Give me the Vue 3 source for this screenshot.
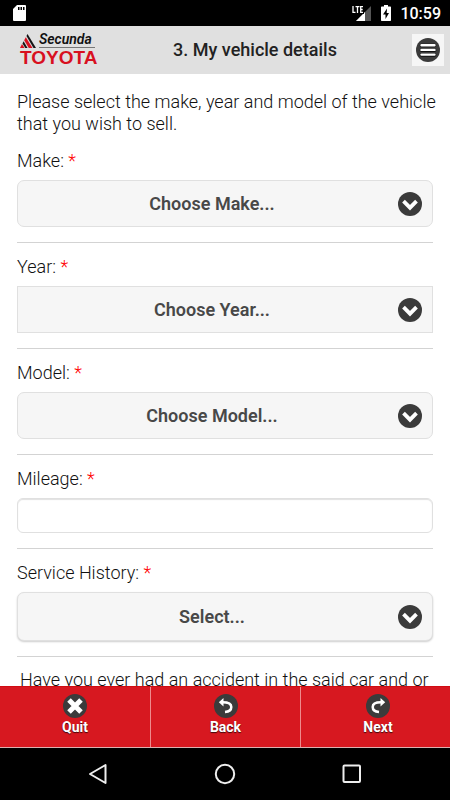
<script setup>
import { ref } from 'vue'

const fields = [
  { id: 'make', label: 'Make:', placeholder: 'Choose Make...', kind: 'select' },
  { id: 'year', label: 'Year:', placeholder: 'Choose Year...', kind: 'select', variant: 'square' },
  { id: 'model', label: 'Model:', placeholder: 'Choose Model...', kind: 'select' },
  { id: 'mileage', label: 'Mileage:', kind: 'input' },
  { id: 'service', label: 'Service History:', placeholder: 'Select...', kind: 'select', variant: 'raised' }
]
const values = ref({ make: '', year: '', model: '', mileage: '', service: '' })
</script>

<template>
  <div class="screen">
    <div class="status">
      <svg class="sd" width="13" height="16" viewBox="0 0 13 16">
        <path d="M4 0H12Q13 0 13 1V15Q13 16 12 16H1Q0 16 0 15V4Z" fill="#fff" />
        <path d="M5 2h1.500v3h-1.500zM7.500 2h1.500v3h-1.500zM10 2h1.500v3h-1.500z" fill="#000" />
      </svg>
      <div class="status-right">
        <svg width="20" height="17" viewBox="0 0 20 17">
          <path d="M19 1V16H4Z" fill="#555" />
          <path d="M13 7V16H4Z" fill="#fff" />
          <path d="M0 0H12V9H0Z" fill="#000" />
          <path d="M1 1V7.300H3.500M3.500 1.700H7.500M5.500 1.700V8M11 1.700H8.700V7.300H11M8.700 4.500H10.700" fill="none" stroke="#fff" stroke-width="1.300" />
        </svg>
        <svg width="10" height="16" viewBox="0 0 10 16">
          <path d="M3 0H7V1.500H9.300Q10 1.500 10 2.200V15.300Q10 16 9.300 16H.700Q0 16 0 15.300V2.200Q0 1.500 .700 1.500H3Z" fill="#fff" />
          <path d="M6 3.500L2 9.500H4.500V14L8 8H5.700Z" fill="#000" />
        </svg>
        <span class="clock">10:59</span>
      </div>
    </div>

    <header class="header">
      <div class="logo">
        <div class="logo-top">
          <svg width="16" height="14" viewBox="0 0 16 14">
            <path d="M7.500 0L16 14H0Z" fill="#d9d9d9" />
            <path d="M7.500 0L16 14H13.500L6.500 2Z" fill="#151515" />
            <path d="M5.800 3.200L12.500 14H8.800L4.200 6.300Z" fill="#d8101f" />
            <path d="M3.600 7.300L7.500 14H5.300L2.500 9.500Z" fill="#151515" />
            <path d="M2 10L4.500 14H0Z" fill="#d8101f" />
          </svg>
          <span class="secunda">Secunda</span>
        </div>
        <span class="toyota">TOYOTA</span>
      </div>
      <h1>3. My vehicle details</h1>
      <button class="menu" type="button" aria-label="Menu">
        <svg width="24" height="24" viewBox="0 0 24 24">
          <circle cx="12" cy="12" r="12" fill="#3b3b3b" />
          <path d="M5.500 7.500H18.500M5.500 12.200H18.500M5.500 16.900H18.500" stroke="#111" stroke-width="3.600" stroke-linecap="round" />
          <path d="M5.500 7.200H18.500M5.500 11.900H18.500M5.500 16.600H18.500" stroke="#fff" stroke-width="2.400" stroke-linecap="round" />
        </svg>
      </button>
    </header>

    <main class="main">
      <p class="intro">Please select the make, year and model of the vehicle that you wish to sell.</p>
      <div v-for="f in fields" :key="f.id" class="field">
        <label :for="f.id">{{ f.label }} <span class="req">*</span></label>
        <div v-if="f.kind === 'select'" class="select-wrap">
          <select :id="f.id" v-model="values[f.id]" :class="f.variant">
            <option value="">{{ f.placeholder }}</option>
          </select>
          <svg class="chevron" width="24" height="24" viewBox="0 0 24 24">
            <circle cx="12" cy="12" r="12" fill="#3b3b3b" />
            <path d="M5.500 9.200L12 15.700L18.500 9.200" fill="none" stroke="#fff" stroke-width="3.800" />
          </svg>
        </div>
        <input v-else :id="f.id" v-model="values[f.id]" type="text" />
      </div>
      <p class="question">Have you ever had an accident in the said car and or</p>
    </main>

    <footer class="actions">
      <button type="button">
        <svg width="24" height="24" viewBox="0 0 24 24">
          <circle cx="12" cy="12" r="12" fill="#3b3b3b" />
          <path d="M6 6L18 18M18 6L6 18" stroke="#fff" stroke-width="5" />
        </svg>
        <span>Quit</span>
      </button>
      <button type="button">
        <svg width="24" height="24" viewBox="0 0 24 24">
          <circle cx="12" cy="12" r="12" fill="#3b3b3b" />
          <path d="M8.500 8.300Q17.300 8.300 17.300 13Q17.300 17.500 11 18" fill="none" stroke="#fff" stroke-width="2.500" />
          <path d="M4.800 8.300L9.500 4V12.600Z" fill="#fff" />
        </svg>
        <span>Back</span>
      </button>
      <button type="button">
        <svg width="24" height="24" viewBox="0 0 24 24">
          <circle cx="12" cy="12" r="12" fill="#3b3b3b" />
          <path d="M15 8.300Q6.700 8.300 6.700 13Q6.700 17.500 13 18" fill="none" stroke="#fff" stroke-width="2.500" />
          <path d="M19.200 8.300L14.500 4V12.600Z" fill="#fff" />
        </svg>
        <span>Next</span>
      </button>
    </footer>

    <nav class="navbar">
      <button type="button" aria-label="Back">
        <svg width="22" height="22" viewBox="0 0 22 22"><path d="M18.500 2V20L3 11Z" fill="none" stroke="#eee" stroke-width="2" stroke-linejoin="round" /></svg>
      </button>
      <button type="button" aria-label="Home">
        <svg width="22" height="22" viewBox="0 0 22 22"><circle cx="11" cy="11" r="9.200" fill="none" stroke="#eee" stroke-width="2" /></svg>
      </button>
      <button type="button" aria-label="Recent apps">
        <svg width="22" height="22" viewBox="0 0 22 22"><rect x="2.500" y="2.500" width="16.500" height="16.500" rx="1" fill="none" stroke="#eee" stroke-width="2" /></svg>
      </button>
    </nav>
  </div>
</template>

<style>
body {
  margin: 0;
  background: #fff;
}
</style>

<style scoped>
* {
  box-sizing: border-box;
}
.screen {
  display: flex;
  flex-direction: column;
  height: 100vh;
  overflow: hidden;
  font-family: Roboto, "Liberation Sans", sans-serif;
  font-size: 18px;
  font-weight: 300;
  line-height: 22px;
  color: #111;
}
svg {
  display: block;
  flex: none;
}
button {
  padding: 0;
  border: 0;
  font-family: inherit;
}
.status {
  flex: none;
  height: 26px;
  padding: 0 9px 0 13px;
  display: flex;
  align-items: center;
  justify-content: space-between;
  background: #000;
  color: #fff;
}
.status-right {
  display: flex;
  align-items: center;
  gap: 9px;
}
.clock {
  padding-top: 2px;
  font-size: 16px;
  font-weight: 500;
}
.header {
  flex: none;
  height: 48px;
  padding: 0 6px 0 20px;
  display: flex;
  align-items: center;
  background: #e0e0e0;
}
.header h1 {
  flex: 1;
  margin: 0;
  text-align: center;
  font-size: 18px;
  font-weight: 500;
  color: #222;
}
.logo {
  width: 78px;
}
.logo-top {
  display: flex;
  align-items: flex-end;
  gap: 3px;
  height: 15px;
}
.secunda {
  width: 56px;
  border-bottom: 1px solid #777;
  font-size: 14px;
  line-height: 12px;
  padding-bottom: 2px;
  font-weight: 600;
  font-style: italic;
  color: #111;
}
.toyota {
  display: block;
  font-family: "Liberation Sans", sans-serif;
  font-size: 19px;
  line-height: 19px;
  font-weight: 700;
  color: #d8101f;
}
.menu {
  width: 32px;
  height: 32px;
  display: grid;
  place-items: center;
  background: #f6f6f6;
}
.main {
  flex: 1;
  min-height: 0;
  overflow: hidden;
  padding: 17px 17px 0;
  background: #fff;
}
.intro {
  margin: 0 -10px 2px 0;
}
.field {
  display: flex;
  flex-direction: column;
  gap: 8px;
  padding: 13px 0 15px;
  border-bottom: 1px solid #d3d3d3;
}
.req {
  color: #f00;
}
.select-wrap {
  display: grid;
  align-items: center;
}
.select-wrap > * {
  grid-area: 1 / 1;
}
select {
  appearance: none;
  width: 100%;
  height: 47px;
  padding: 0 44px 0 18px;
  border: 1px solid #e0e0e0;
  border-radius: 7px;
  background: #f6f6f6;
  font-family: inherit;
  font-size: 18px;
  font-weight: 600;
  color: #484848;
  text-align: center;
  text-align-last: center;
}
.square {
  border-radius: 0;
}
.raised {
  height: 49px;
  box-shadow: 0 1px 2px rgba(0, 0, 0, 0.2);
}
.chevron {
  justify-self: end;
  margin-right: 11px;
  pointer-events: none;
}
input {
  width: 100%;
  height: 35px;
  padding: 0 8px;
  border: 1px solid #e0e0e0;
  border-radius: 6px;
  background: #fff;
  box-shadow: inset 0 1px 1px rgba(0, 0, 0, 0.12);
  font-family: inherit;
  font-size: 18px;
  color: #333;
}
.question {
  margin: 0;
  padding: 12px 3px 0;
  white-space: nowrap;
}
.actions {
  flex: none;
  height: 62px;
  display: grid;
  grid-template-columns: repeat(3, 1fr);
  background: #d71820;
  border-top: 1px solid #d00c12;
  border-bottom: 1px solid #ddb0b0;
}
.actions button {
  display: flex;
  flex-direction: column;
  align-items: center;
  padding-top: 7px;
  background: transparent;
  color: #fff;
  font-size: 14px;
  line-height: 18px;
  font-weight: 700;
  text-shadow: 0 1px 1px rgba(0, 0, 0, 0.7);
}
.actions button + button {
  border-left: 1px solid #ee8a8c;
}
.actions button:last-child {
  padding-left: 5px;
}
.navbar {
  flex: none;
  height: 52px;
  padding: 0 35px;
  display: grid;
  grid-template-columns: repeat(3, 1fr);
  place-items: center;
  background: #000;
}
.navbar button {
  background: transparent;
}
</style>
